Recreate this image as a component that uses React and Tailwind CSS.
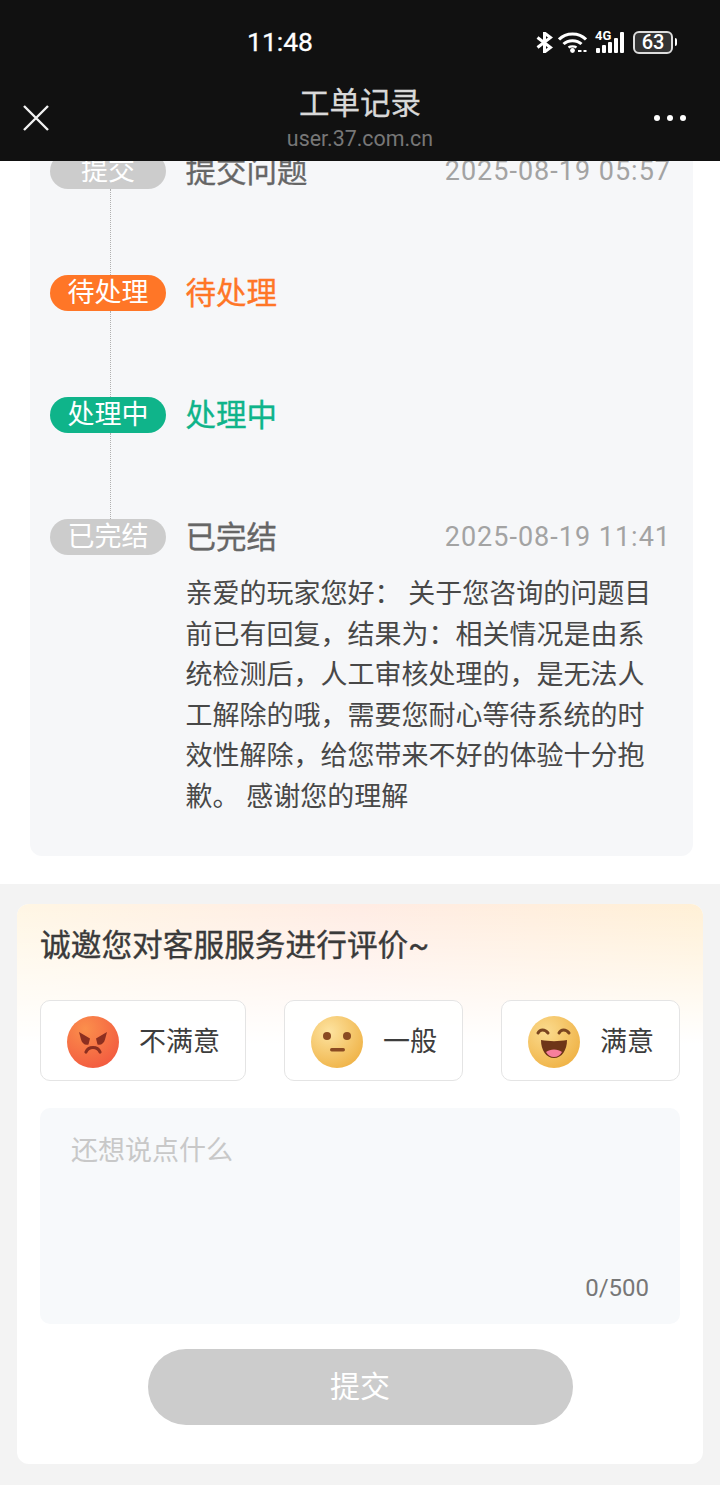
const FONT = "font-['Roboto','Noto_Sans_CJK_SC',sans-serif]";

/**
 * 状态栏图标
 */
const StatusIcons = () => (
  <div className="flex items-center h-[24px]">
    <svg width="17" height="21" viewBox="0 0 17 21" fill="none" stroke="#fff" strokeWidth="3" className="mr-[5px]">
      <path d="M1.500 5.500l13 10-6 4.500V1l6 4.500-13 10" />
    </svg>
    <svg width="29" height="21" viewBox="0 0 29 21" fill="none" stroke="#fff" strokeWidth="3" className="mr-[8px]">
      <path d="M1 7.500c7-7.500 20-7.500 27 0" />
      <path d="M5.500 12c4.500-4.500 13.500-4.500 18 0" />
      <path d="M10.500 15.500c2-1.500 6-1.500 8 0" strokeWidth="2.400" />
      <circle cx="14.500" cy="18.500" r="2.400" fill="#fff" stroke="none" />
      <path d="M20 19h3.500M25.500 19h3" strokeWidth="2" />
    </svg>
    <div className="relative w-[29px] h-[22px] mr-[9px]">
      <span className="absolute left-0 -top-[2px] text-[13px] leading-[14px] font-bold text-white font-['Roboto',sans-serif]">4G</span>
      <div className="absolute inset-0 flex items-end justify-end gap-[2px]">
        <div className="w-[4px] h-[5px] bg-white rounded-[1px]" />
        <div className="w-[4px] h-[8px] bg-white rounded-[1px]" />
        <div className="w-[4px] h-[11px] bg-white rounded-[1px]" />
        <div className="w-[4px] h-[15px] bg-white rounded-[1px]" />
        <div className="w-[4px] h-[21px] bg-white rounded-[1px]" />
      </div>
    </div>
    <div className="flex items-center">
      <div className="w-[40px] h-[23px] border-2 border-[#dddddd] rounded-[6px] bg-[#333333] flex items-center justify-center text-white text-[20px] leading-none font-medium font-['Roboto',sans-serif]">
        63
      </div>
      <div className="w-[2px] h-[8px] bg-white ml-[2px] rounded-r-sm" />
    </div>
  </div>
);

/**
 * 顶部导航
 */
const Header = () => (
  <div className="h-[161px] bg-[#111111] shrink-0 relative z-10 text-white">
    <div className="h-[84px] relative">
      <span className="absolute left-[247px] top-[26px] text-[26.500px] leading-[32px] [-webkit-text-stroke:0.3px] text-white font-['Roboto',sans-serif]">11:48</span>
      <div className="absolute left-[536px] top-[30px]">
        <StatusIcons />
      </div>
    </div>
    <div className="relative h-[77px]">
      <svg width="28" height="28" viewBox="0 0 28 28" className="absolute left-[22px] top-[20px]" stroke="#f2f2f2" strokeWidth="2.400" fill="none">
        <path d="M2 2l24 24M26 2L2 26" />
      </svg>
      <div className="flex flex-col items-center">
        <div className="text-[30.500px] leading-[40px] [-webkit-text-stroke:0.3px] text-[#d9d9d9]">工单记录</div>
        <div className="text-[21.400px] leading-[30px] text-[#777777]">user.37.com.cn</div>
      </div>
      <div className="absolute left-[654px] top-[31px] flex gap-[7px]">
        <div className="w-[6px] h-[6px] rounded-full bg-white" />
        <div className="w-[6px] h-[6px] rounded-full bg-white" />
        <div className="w-[6px] h-[6px] rounded-full bg-white" />
      </div>
    </div>
  </div>
);

const rows = [
  { pill: '提交', title: '提交问题', time: '2025-08-19 05:57', pillBg: 'bg-[#cccccc]', titleColor: 'text-[#666666]' },
  { pill: '待处理', title: '待处理', pillBg: 'bg-[#ff7627]', titleColor: 'text-[#ff7627]' },
  { pill: '处理中', title: '处理中', pillBg: 'bg-[#0fb48a]', titleColor: 'text-[#0fb48a]' },
];

/**
 * 时间线一行
 */
const TimelineRow = ({ pill, title, time, pillBg, titleColor }) => (
  <div className="flex h-[122px]">
    <div className="w-[116px] shrink-0 flex flex-col items-center">
      <div className={`w-[116px] h-[36px] shrink-0 rounded-full ${pillBg} text-white text-[27px] leading-[37px] text-center`}>
        {pill}
      </div>
      <div className="flex-1 border-l border-dotted border-[#b0b0b0] ml-[4px]" />
    </div>
    <div className="flex-1 ml-[19.500px] flex justify-between">
      <div className={`text-[30.500px] leading-[37px] [-webkit-text-stroke:0.35px] ${titleColor}`}>{title}</div>
      {time && <div className="text-[27px] leading-[37px] tracking-[1px] text-[#a3a3a3]">{time}</div>}
    </div>
  </div>
);

/**
 * 评价表情
 */
const AngryFace = () => (
  <svg width="54" height="54" viewBox="0 0 54 54">
    <defs>
      <radialGradient id="angry" cx="0.35" cy="0.25" r="0.85">
        <stop offset="0" stopColor="#fb8f4c" />
        <stop offset="1" stopColor="#f2583f" />
      </radialGradient>
    </defs>
    <circle cx="27" cy="27" r="26" fill="url(#angry)" />
    <path d="M13 17l11 6.500-1.500 6c-3.500 1-6.500-1-7.500-5zM41 17l-11 6.500 1.500 6c3.500 1 6.500-1 7.500-5z" fill="#8c2f20" />
    <path d="M20 37c2.500-6 11.500-6 14 0" fill="none" stroke="#8c2f20" strokeWidth="3.200" strokeLinecap="round" />
  </svg>
);

const NeutralFace = () => (
  <svg width="54" height="54" viewBox="0 0 54 54">
    <defs>
      <radialGradient id="neutral" cx="0.35" cy="0.3" r="0.85">
        <stop offset="0" stopColor="#fde3a0" />
        <stop offset="1" stopColor="#eeae3e" />
      </radialGradient>
    </defs>
    <circle cx="27" cy="27" r="26" fill="url(#neutral)" />
    <circle cx="17" cy="21" r="4" fill="#8a4a22" />
    <circle cx="37" cy="21" r="4" fill="#8a4a22" />
    <rect x="20" y="33" width="15" height="3.500" rx="1.700" fill="#8a4a22" />
  </svg>
);

const HappyFace = () => (
  <svg width="54" height="54" viewBox="0 0 54 54">
    <defs>
      <radialGradient id="happy" cx="0.35" cy="0.3" r="0.85">
        <stop offset="0" stopColor="#fbdb8e" />
        <stop offset="1" stopColor="#eeae3e" />
      </radialGradient>
    </defs>
    <circle cx="27" cy="27" r="26" fill="url(#happy)" />
    <path d="M11 18c2-4 7-4 10 0M32 18c2-4 7-4 10 0" fill="none" stroke="#7a4520" strokeWidth="3" strokeLinecap="round" />
    <path d="M14 25c8 1.500 18 1.500 26 0 0 10-5 18-13 18s-13-8-13-18z" fill="#6e3518" />
    <path d="M19 37c4-3.500 12-3.500 16 0-2 3.500-4.500 5-8 5s-6-1.500-8-5z" fill="#f77f9c" />
  </svg>
);

const RateButton = ({ width, face, label }) => (
  <div className={`${width} h-[81px] pt-[3px] bg-white/90 border border-[#e4e4e4] rounded-[10px] flex items-center justify-center gap-[19px]`}>
    {face}
    <span className="text-[27px] leading-[36px] text-[#3d3d3d]">{label}</span>
  </div>
);

const App = () => (
  <div className={`w-[720px] h-[1485px] flex flex-col overflow-hidden bg-white ${FONT}`}>
    <Header />
    <div className="h-[723px] shrink-0 bg-white pl-[30px] pr-[27px] overflow-hidden">
      <div className="h-[695px] bg-[#f6f7f9] rounded-b-[12px] pl-[20px] pr-[22px] overflow-hidden">
        <div className="-mt-[8px]">
          {rows.map((r) => (
            <TimelineRow key={r.pill} {...r} />
          ))}
          <div className="flex">
            <div className="w-[116px] h-[36px] shrink-0 rounded-full bg-[#cccccc] text-white text-[27px] leading-[37px] text-center">
              已完结
            </div>
            <div className="flex-1 ml-[19.500px] min-w-0">
              <div className="flex justify-between">
                <div className="text-[30.500px] leading-[37px] [-webkit-text-stroke:0.35px] text-[#666666]">已完结</div>
                <div className="text-[27px] leading-[37px] tracking-[1px] text-[#a3a3a3]">2025-08-19 11:41</div>
              </div>
              <p className="mt-[18px] pr-[2px] text-[27px] leading-[40.600px] text-[#484848]">
                亲爱的玩家您好： 关于您咨询的问题目前已有回复，结果为：相关情况是由系统检测后，人工审核处理的，是无法人工解除的哦，需要您耐心等待系统的时效性解除，给您带来不好的体验十分抱歉。 感谢您的理解
              </p>
            </div>
          </div>
        </div>
      </div>
    </div>
    <div className="flex-1 bg-[#f3f3f3] px-[17px] pt-[20px]">
      <div className="h-[560px] rounded-[12px] bg-white relative overflow-hidden px-[23px]">
        <div className="absolute inset-x-0 top-0 h-[140px] bg-gradient-to-r from-[#fff6e4] via-[#ffece4] to-[#fff0d6]" />
        <div className="absolute inset-x-0 top-0 h-[140px] bg-gradient-to-b from-white/0 to-white" />
        <div className="relative">
          <div className="pt-[21px] text-[30.700px] leading-[42px] [-webkit-text-stroke:0.35px] text-[#3a3a3a]">诚邀您对客服服务进行评价~</div>
          <div className="mt-[33px] flex justify-between">
            <RateButton width="w-[206px]" face={<AngryFace />} label="不满意" />
            <RateButton width="w-[179px]" face={<NeutralFace />} label="一般" />
            <RateButton width="w-[179px]" face={<HappyFace />} label="满意" />
          </div>
          <div className="mt-[27px] h-[216px] bg-[#f7f9fb] rounded-[10px] relative px-[31px] pt-[25px]">
            <div className="text-[27px] leading-[36px] text-[#c8c8c8]">还想说点什么</div>
            <div className="absolute right-[31px] bottom-[19px] text-[24px] leading-[34px] text-[#777777]">0/500</div>
          </div>
          <div className="mt-[25px] mx-auto w-[425px] h-[76px] rounded-full bg-[#cccccc] text-white text-[30px] leading-[75px] text-center">
            提交
          </div>
        </div>
      </div>
    </div>
  </div>
);

export default App;
